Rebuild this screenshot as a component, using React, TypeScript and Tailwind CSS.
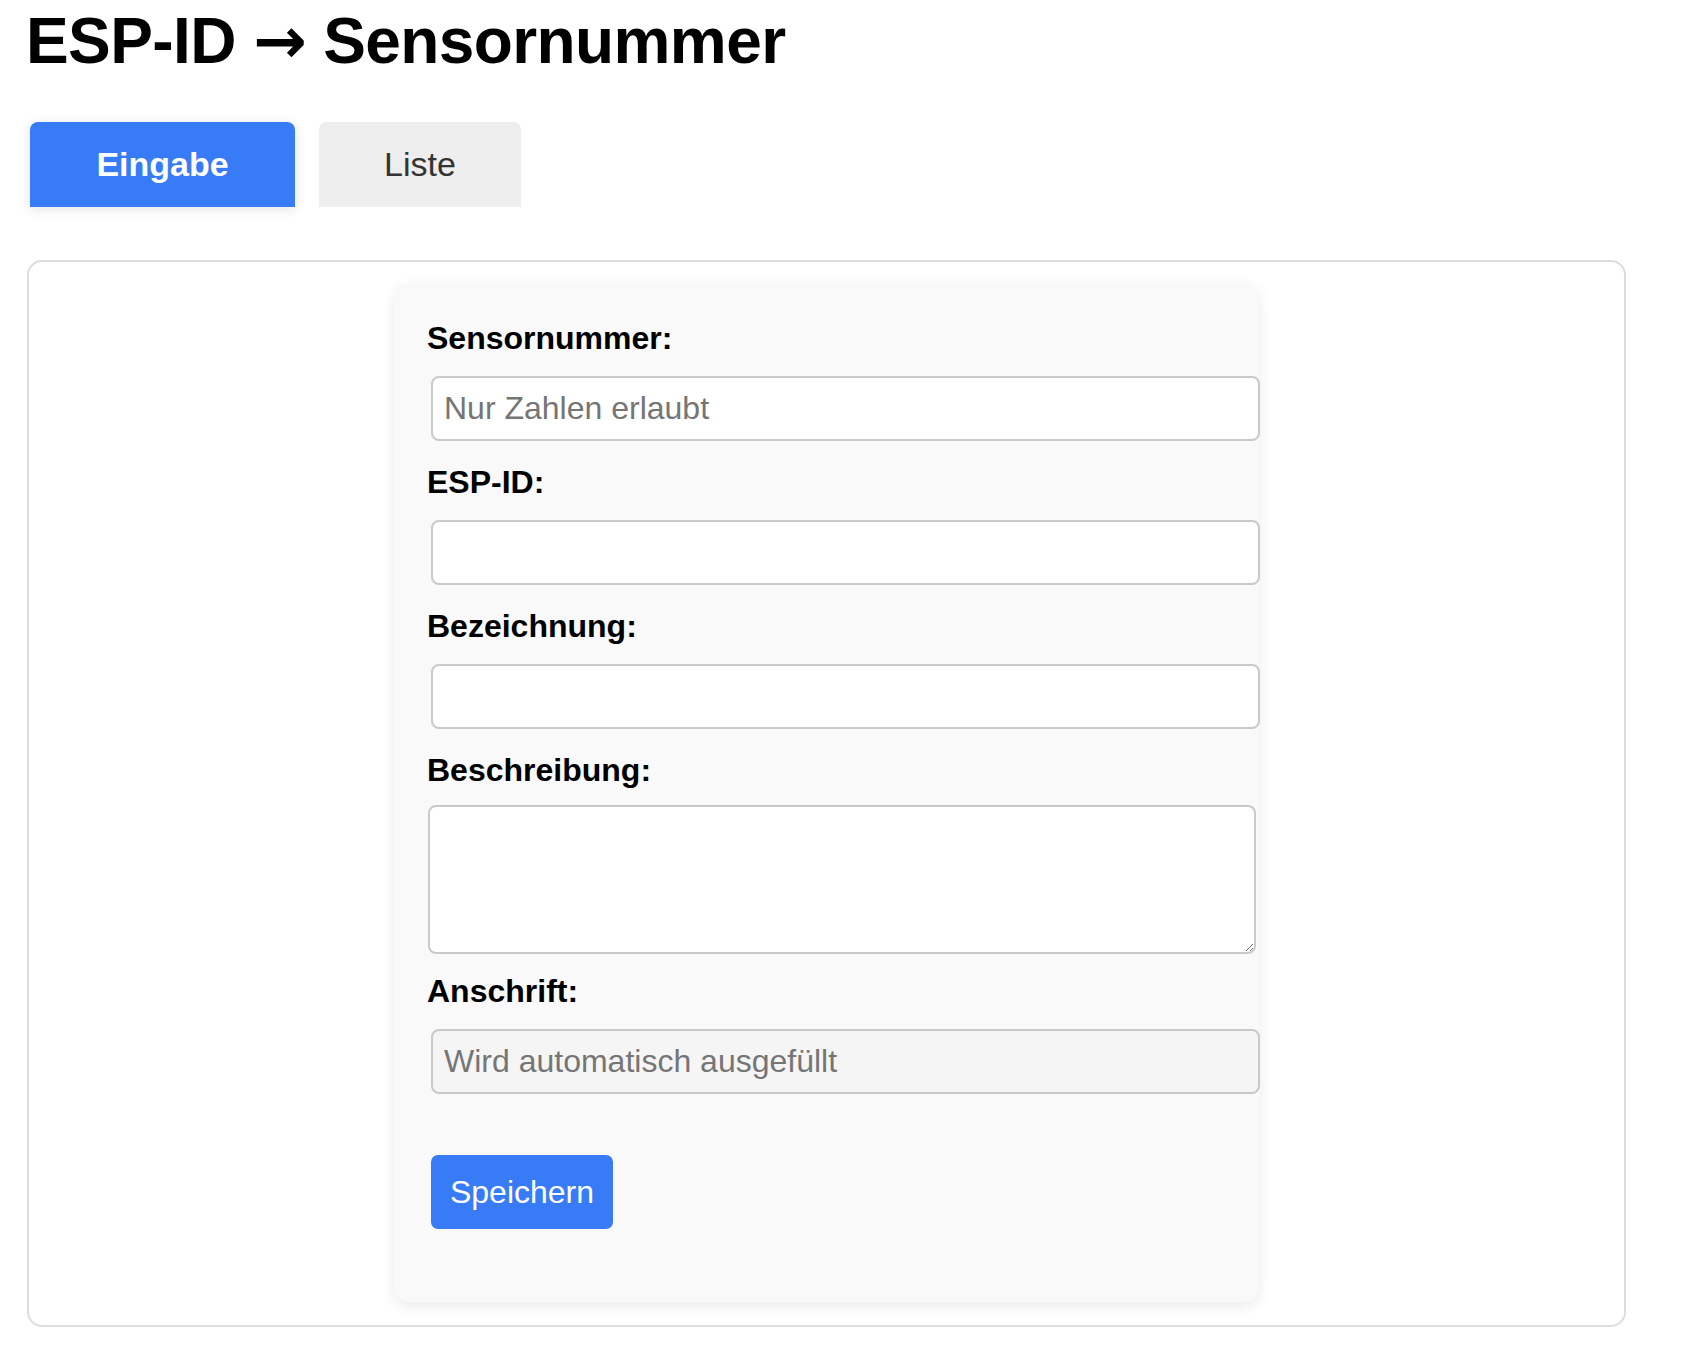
import { type JSX } from "react";

// ESP-ID → Sensornummer: Eingabeformular mit Tabs (Eingabe / Liste)

const FONT = "font-['Liberation_Sans',Arial,sans-serif]";

interface FieldProps {
  label: string;
  placeholder?: string;
  readOnly?: boolean;
}

function Label({ children }: { children: string }): JSX.Element {
  return <label className="block h-[37px] text-[32px] leading-[37px] font-bold text-black">{children}</label>;
}

function TextField({ label, placeholder, readOnly }: FieldProps): JSX.Element {
  return (
    <div className="flex flex-col">
      <Label>{label}</Label>
      <input
        type="text"
        readOnly={readOnly}
        placeholder={placeholder}
        className={
          "mt-[19px] ml-[4px] h-[65px] w-[829px] rounded-[8px] border-2 border-[#c9c9c9] pl-[11px] text-[32px] text-black outline-none placeholder:text-[#757575] " +
          (readOnly ? "bg-[#f5f5f5]" : "bg-white")
        }
      />
    </div>
  );
}

export default function App(): JSX.Element {
  return (
    <div className={`${FONT} min-h-screen bg-white pt-[4px] pl-[24px]`}>
      <h1 className="ml-[2px] h-[74px] text-[64px] leading-[74px] font-bold tracking-[-0.6px] text-black">
        ESP-ID <span className="font-['DejaVu_Sans',sans-serif]">→</span> Sensornummer
      </h1>

      {/* Tabs */}
      <div className="mt-[44px] ml-[6px] flex gap-[24px]">
        <button
          type="button"
          className="flex h-[85px] w-[265px] items-center justify-center rounded-t-[8px] bg-[#377bf6] text-[34px] font-bold text-white shadow-[0_2px_12px_rgba(0,0,0,0.12)]"
        >
          Eingabe
        </button>
        <button
          type="button"
          className="flex h-[85px] w-[202px] items-center justify-center rounded-t-[8px] bg-[#eeeeee] text-[34px] text-[#333333]"
        >
          Liste
        </button>
      </div>

      {/* Panel */}
      <div className="mt-[53px] ml-[3px] w-[1599px] rounded-[15px] border-2 border-[#dddddd] pt-[22px] pb-[23px]">
        <form
          onSubmit={(e) => e.preventDefault()}
          className="mx-auto flex w-[865px] flex-col rounded-[15px] bg-[#f9f9f9] pt-[36px] pb-[73px] pl-[33px] shadow-[0_4px_14px_rgba(0,0,0,0.09)]"
        >
          <div className="flex flex-col gap-[23px]">
            <TextField label="Sensornummer:" placeholder="Nur Zahlen erlaubt" />
            <TextField label="ESP-ID:" />
            <TextField label="Bezeichnung:" />
          </div>

          <div className="mt-[23px] flex flex-col">
            <Label>Beschreibung:</Label>
            <textarea className="mt-[16px] ml-px h-[149px] w-[828px] rounded-[8px] border-2 border-[#c9c9c9] bg-white p-[10px] text-[32px] outline-none" />
          </div>

          <div className="mt-[19px]">
            <TextField label="Anschrift:" placeholder="Wird automatisch ausgefüllt" readOnly />
          </div>

          <div className="mt-[61px]">
            <button
              type="submit"
              className="ml-[4px] h-[74px] w-[182px] rounded-[7px] bg-[#377bf6] text-[32px] text-white"
            >
              Speichern
            </button>
          </div>
        </form>
      </div>
    </div>
  );
}
